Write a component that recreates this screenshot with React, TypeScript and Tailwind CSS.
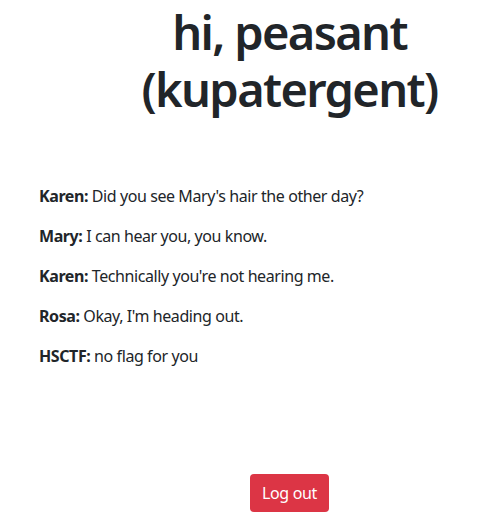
const lines = [
  { who: "Karen", text: "Did you see Mary's hair the other day?" },
  { who: "Mary", text: "I can hear you, you know." },
  { who: "Karen", text: "Technically you're not hearing me." },
  { who: "Rosa", text: "Okay, I'm heading out." },
  { who: "HSCTF", text: "no flag for you" },
];

export default function App() {
  return (
    <div className="min-h-[525px] bg-white text-[#212529] font-['Segoe_UI','Noto_Sans',sans-serif]">
      <div className="pl-[89px] pt-1 text-center">
        <h1 className="text-[47px] leading-[57px] font-semibold tracking-[-0.035em]">
          hi, peasant (kupatergent)
        </h1>
      </div>
      <div className="mt-[66px] px-[39px] text-base leading-6 tracking-[-0.026em]">
        {lines.map((l, i) => (
          <p key={i} className="mb-4">
            <b className="font-bold">{l.who}:</b> {l.text}
          </p>
        ))}
      </div>
      <div className="pl-[89px] pt-[90px] text-center">
        <button className="rounded bg-[#dc3545] px-3 py-[7px] text-base leading-6 text-white tracking-[-0.02em]">
          Log out
        </button>
      </div>
    </div>
  );
}
